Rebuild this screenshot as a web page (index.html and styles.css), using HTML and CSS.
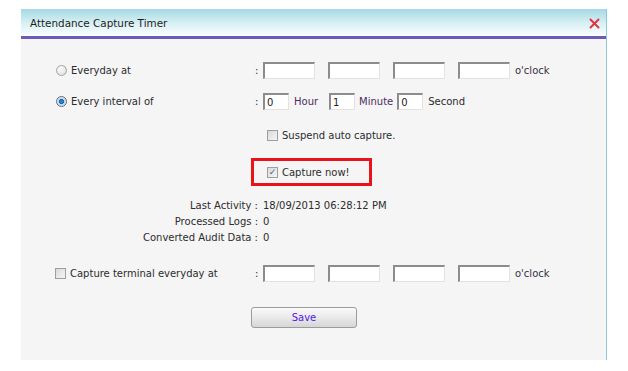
FILE: index.html
```html
<!DOCTYPE html>
<html lang="en">
<head>
  <meta charset="UTF-8" />
  <title>Attendance Capture Timer</title>
  <link rel="stylesheet" href="styles.css">
</head>
<body>
  <div class="dialog">
    <div class="titlebar">
      <span class="title">Attendance Capture Timer</span>
      <span class="close">
        <svg width="11" height="11" viewBox="0 0 11 11">
          <path d="M1.5 1.5 L9.5 9.5 M9.5 1.5 L1.5 9.5" stroke="#e2323f" stroke-width="2" stroke-linecap="round"/>
        </svg>
      </span>
    </div>

    <div class="content">
      <div class="row">
        <label class="opt"><span class="radio"></span>Everyday at</label>
        <span class="colon">:</span>
        <input type="text" class="field wide" />
        <input type="text" class="field wide" />
        <input type="text" class="field wide" />
        <input type="text" class="field wide" />
        <span class="unit oclock">o'clock</span>
      </div>

      <div class="row row-interval">
        <label class="opt"><span class="radio radio-on"></span>Every interval of</label>
        <span class="colon">:</span>
        <input type="text" class="field small" value="0" />
        <span class="unit hour">Hour</span>
        <input type="text" class="field small gap-hour" value="1" />
        <span class="unit minute">Minute</span>
        <input type="text" class="field small gap-minute" value="0" />
        <span class="unit second">Second</span>
      </div>

      <div class="row row-suspend">
        <span class="check"></span>Suspend auto capture.
      </div>

      <div class="capture-box">
        <span class="check check-on">&#10003;</span>Capture now!
      </div>

      <div class="info">
        <div class="info-line"><span class="info-label">Last Activity :</span><span class="info-value">18/09/2013 06:28:12 PM</span></div>
        <div class="info-line"><span class="info-label">Processed Logs :</span><span class="info-value">0</span></div>
        <div class="info-line"><span class="info-label">Converted Audit Data :</span><span class="info-value">0</span></div>
      </div>

      <div class="row row-terminal">
        <label class="opt"><span class="check"></span>Capture terminal everyday at</label>
        <span class="colon">:</span>
        <input type="text" class="field wide" />
        <input type="text" class="field wide" />
        <input type="text" class="field wide" />
        <input type="text" class="field wide" />
        <span class="unit oclock">o'clock</span>
      </div>

      <button class="save">Save</button>
    </div>
  </div>
</body>
</html>
```

FILE: styles.css
```css
body {
  margin: 0;
  background: #fff;
  font-family: "DejaVu Sans", Verdana, sans-serif;
  font-size: 10px;
  color: #2c2c2c;
}
.dialog {
  margin: 9px 0 0 21px;
  width: 586px;
  border-right: 1px solid #8ccbd5;
  box-sizing: border-box;
}
.titlebar {
  height: 27px;
  display: flex;
  align-items: center;
  justify-content: space-between;
  padding: 0 6px 0 9px;
  background: linear-gradient(to bottom, #a4d9e3 0%, #d6eff3 50%, #fbfefe 100%);
  border-bottom: 3px solid #6c5cb8;
}
.title {
  color: #1e1e1e;
  font-size: 10.4px;
}
.close {
  display: flex;
  margin-top: 2px;
}
.content {
  background: #f5f5f5;
  padding: 23px 0 32px 34px;
}
.row {
  display: flex;
  align-items: center;
  height: 17px;
}
.row-interval {
  margin-top: 14px;
}
.row-suspend {
  margin-top: 17px;
  height: 16px;
  padding-left: 212px;
}
.row-terminal {
  margin-top: 20px;
}
.opt {
  width: 198px;
  display: flex;
  align-items: center;
  gap: 4px;
}
.colon {
  width: 10px;
  padding-left: 2px;
  box-sizing: border-box;
}
.field {
  height: 17px;
  box-sizing: border-box;
  margin: 0;
  padding: 0 2px;
  border-style: solid;
  border-width: 2px 1px 1px 2px;
  border-color: #8c8c8c #e2e2e2 #e2e2e2 #8c8c8c;
  background: #fff;
  font-family: "DejaVu Sans", Verdana, sans-serif;
  font-size: 10px;
  color: #222;
  outline: none;
}
.wide {
  width: 52px;
}
.wide + .wide {
  margin-left: 13px;
}
.small {
  width: 26px;
}
.gap-hour {
  margin-left: 11px;
}
.gap-minute {
  margin-left: 4px;
}
.unit.oclock {
  margin-left: 5px;
  color: #3a3044;
}
.unit.hour {
  margin-left: 5px;
  color: #4f2b63;
}
.unit.minute {
  margin-left: 4px;
  color: #4f2b63;
}
.unit.second {
  margin-left: 5px;
}
.radio {
  width: 11px;
  height: 11px;
  margin-left: 1px;
  border-radius: 50%;
  box-sizing: border-box;
  border: 1px solid #a5a5a5;
  background: radial-gradient(circle at 40% 35%, #ffffff 0%, #e6e6e6 60%, #cfcfcf 100%);
}
.radio-on {
  border-color: #5f6f80;
  background: radial-gradient(circle at 50% 50%, #2f9ae4 0%, #1468b4 35%, #c9d4de 45%, #eef2f5 100%);
}
.check {
  width: 11px;
  height: 11px;
  margin-right: 4px;
  box-sizing: border-box;
  border: 1px solid #9e9e9e;
  background: linear-gradient(to bottom right, #d9d9d9, #f6f6f6);
  display: inline-flex;
  align-items: center;
  justify-content: center;
  font-size: 9px;
  line-height: 1;
  color: #4b5d96;
}
.opt .check {
  margin-right: 0;
}
.capture-box {
  margin: 15px 0 0 196px;
  width: 121px;
  height: 28px;
  box-sizing: border-box;
  border: 3px solid #e8141c;
  display: flex;
  align-items: center;
  padding-left: 13px;
}
.info {
  margin-top: 11px;
}
.info-line {
  display: flex;
  height: 16px;
  align-items: center;
}
.info-label {
  width: 203px;
  text-align: right;
}
.info-value {
  padding-left: 5px;
}
.save {
  display: block;
  margin: 25px 0 0 196px;
  width: 106px;
  height: 21px;
  border: 1px solid #9b9b9b;
  border-radius: 3px;
  background: linear-gradient(to bottom, #fafafa 0%, #e9e9e9 50%, #d6d6d6 100%);
  font-family: "DejaVu Sans", Verdana, sans-serif;
  font-size: 10px;
  color: #5a16e6;
  padding: 0;
}
```
